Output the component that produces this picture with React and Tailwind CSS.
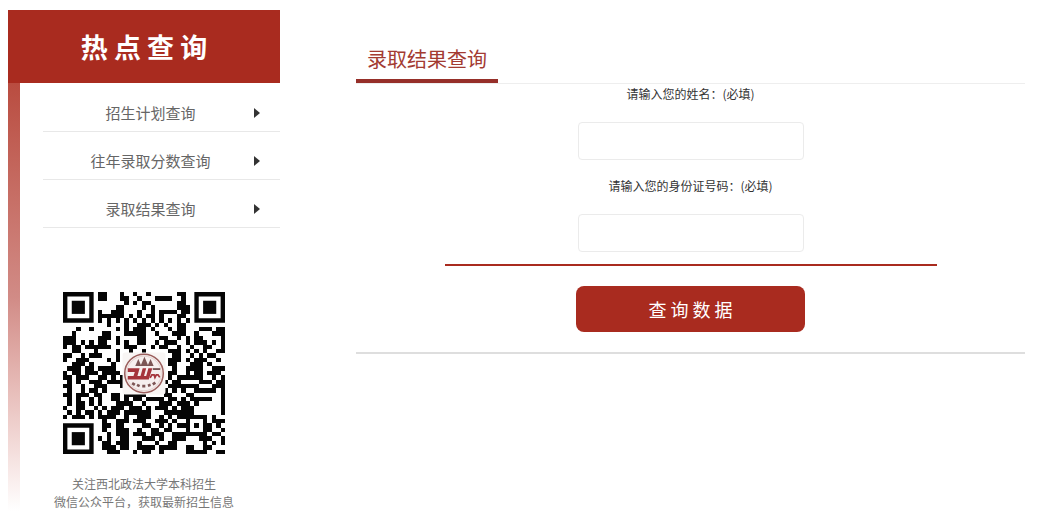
import React from "react";

const MENU = ["招生计划查询", "往年录取分数查询", "录取结果查询"];

// Dark modules of each QR row, as column numbers and ranges (finder patterns are drawn separately).
const QR_ROWS = [
  "8-9 13 16 19 26-27",
  "8-9 13-14 17 21-24 27",
  "14 16 18-19 26-27",
  "12-13 18 20 26-28",
  "8 11-13 17 20 22-25 27-28",
  "8-13 15 17 19-20 22 26-27",
  "8 10 12 14 16 18 20 22 24 26 28",
  "10 14 17-19 21 23 26-27",
  "3 6 12 14 16-18 20 24 26-27 31-33 35-36",
  "2 9-10 14-18 21 25-27 30 34-36",
  "0-2 8-10 12 17-18 22-23 26 28 30-31 36",
  "0-2 4 6 8-9 12 14 17-18 21 23-25 28 30-32 34 36",
  "0 2-3 5-10 14-16 20 22-23 26 29 32-33 36",
  "2-3 7 12 15 18 24-26 28 30 32 35-36",
  "0-1 4 6-8 12 25-26 29 31 33-34",
  "0 3-5 10 12 24-26 28 30-32 35",
  "2-4 6 11 24-25 29-31 33",
  "1-3 5-6 8-11 25 28-31 34-36",
  "0 2-3 5-7 9-12 24-25 28 30-31 33-35",
  "0-1 3-5 8-9 11 13 24 26-31 34 36",
  "1 3 6-8 10-13 23 25-26 31-33 35-36",
  "0-1 4 7-9 13 24-30 34-36",
  "1 4 6-7 9 23 25 27 30-34 36",
  "0-1 3-5 7-8 11-12 14-18 23-24 28-29 36",
  "1 3 6 8 11-12 14 16-17 19-22 24-25 27 29-33 36",
  "1 3-4 6 8 12-15 18 22-24 26-28 30 36",
  "0 3-4 7 9 11-13 15-17 19 21-23 25 27-29 36",
  "1 3 5-6 8 10-12 14-19 23-29 36",
  "0 2-4 6 8-11 14 17-19 22 24 26-32 34",
  "9 12-14 16-18 21-23 25 28 32 34-36",
  "9-10 12-13 18-19 22 24 26-28 30 32-33 35",
  "9 12-14 17 20-21 23-24 28 32-33 36",
  "10 12-14 16-18 20-22 25-32 34-35",
  "8 10 13-14 18-20 22 25-27 31-33 36",
  "9-10 12-14 17 21 24-25 32 34 36",
  "9-11 13-14 17-20 22-25 28-29 32-33",
  "10-12 16 18-19 22 28-32 35-36",
];

function QrCode() {
  const cells = [];
  QR_ROWS.forEach((row, y) =>
    row.split(" ").forEach((run) => {
      const [from, to = from] = run.split("-").map(Number);
      cells.push(`M${from} ${y}h${to - from + 1}v1h-${to - from + 1}z`);
    })
  );
  return (
    <svg viewBox="0 0 37 37" className="size-[162px]" role="img" aria-label="西北政法大学本科招生微信公众平台二维码">
      <path d={cells.join("")} fill="#050505" shapeRendering="crispEdges" />
      {[[0, 0], [30, 0], [0, 30]].map(([x, y]) => (
        <g key={`${x}-${y}`}>
          <path d={`M${x} ${y}h7v7h-7zm1 1v5h5v-5z`} fill="#050505" fillRule="evenodd" />
          <path d={`M${x + 2} ${y + 2}h3v3h-3z`} fill="#050505" />
        </g>
      ))}
      <rect x="13.6" y="13.8" width="9.8" height="9.6" rx="0.6" fill="#f8f5f4" />
      <g transform="translate(18.5 18.6)">
        <circle r="4.4" fill="#f6efee" stroke="#9b5f5d" strokeWidth="0.35" />
        <circle r="3.95" fill="none" stroke="#dcc3c1" strokeWidth="0.15" />
        <path d="M-2 -1.7l.7-1.6.7 1.6zM-.8 -1.7l.9-2.1.9 2.1zM.8 -1.7l.7-1.6.7 1.6z" fill="#7b5655" />
        <path d="M-3.7 -1.2H-1L-1.5 .6H-.8L-.3 -1.2H.5L0 .6H.5L1 -1.2H1.9L1.1 1.4H-3.7V.6H-2.4L-2.1 -.3H-3.7z" fill="#a5343b" />
        <path d="M2 -1h1.7" stroke="#6c4a4a" strokeWidth="0.4" />
        <path d="M1.4 1L1.8 .3H2.3L2.5 .9L2.8 .3H3.2L3.6 .9" fill="none" stroke="#a5343b" strokeWidth="0.4" />
        <path d="M-2.7 2.2l.6.4M-1.6 2.6l.6.3M-.4 2.9h.7M.9 2.8l.6-.2M2 2.5l.6-.4" stroke="#7d5554" strokeWidth="0.6" />
      </g>
    </svg>
  );
}

function Field({ id, label }) {
  return (
    <div className="flex w-full flex-col items-center">
      <label htmlFor={id} className="text-xs leading-5 text-[#333]">{label}</label>
      <input
        id={id}
        type="text"
        className="mt-[18px] h-[38px] w-full max-w-[226px] rounded border border-[#ebebeb] bg-white px-3 text-sm outline-none focus:border-[#a92b1f]"
      />
    </div>
  );
}

export default function App() {
  return (
    <div className="flex items-start bg-white pt-[10px] pr-[31px] pl-2 font-['Noto_Sans_CJK_SC',sans-serif]">
      <aside className="w-[272px] shrink-0">
        <h2 className="bg-[#a92b1f] py-4 text-center text-[27px] leading-[41px] font-bold text-white">热 点 查 询</h2>
        <div className="flex">
          <div className="w-3 shrink-0 bg-linear-to-b from-[#b94c40] via-[#d18b86] to-white" />
          <div className="flex-1">
            <nav className="pt-px pl-[23px]">
              {MENU.map((item) => (
                <a
                  key={item}
                  href="#"
                  className="flex items-center border-b border-[#e8e8e8] pt-[17px] pr-5 pb-[6px] pl-1 text-[15px] leading-6 text-[#666]"
                >
                  <span className="flex-1 text-center">{item}</span>
                  <svg viewBox="0 0 6 10" className="h-[10px] w-[6px] fill-[#333]" aria-hidden="true">
                    <path d="M0 0L6 5L0 10z" />
                  </svg>
                </a>
              ))}
            </nav>
            <div className="flex flex-col items-center pt-16 pr-3">
              <QrCode />
              <p className="mt-[21px] text-center text-xs leading-[18px] text-[#777]">
                关注西北政法大学本科招生
                <br />
                微信公众平台，获取最新招生信息
              </p>
            </div>
          </div>
        </div>
      </aside>

      <main className="ml-[76px] min-w-0 flex-1 border-b-2 border-[#dedede] pt-[34px]">
        <header className="flex border-b border-[#eee]">
          <h1 className="border-b-4 border-[#962f29] px-[11px] pb-[5px] text-xl leading-[30px] text-[#a33b32]">录取结果查询</h1>
        </header>
        <form className="flex flex-col items-center pb-5" onSubmit={(e) => e.preventDefault()}>
          <div className="flex w-full max-w-[492px] flex-col gap-4 border-b-2 border-[#a92b1f] pb-3">
            <Field id="name" label="请输入您的姓名：(必填)" />
            <Field id="id-number" label="请输入您的身份证号码：(必填)" />
          </div>
          <button type="submit" className="mt-5 h-[46px] w-full max-w-[229px] rounded-lg bg-[#a92b1f] text-lg text-white">
            查 询 数 据
          </button>
        </form>
      </main>
    </div>
  );
}
